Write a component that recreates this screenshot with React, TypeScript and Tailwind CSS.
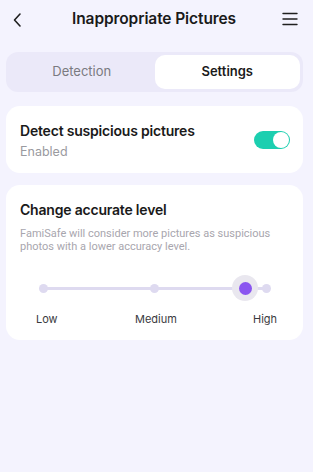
import { useState } from 'react';

export default function App() {
  const [tab, setTab] = useState<'detection' | 'settings'>('settings');
  const [enabled, setEnabled] = useState(true);

  return (
    <div
      className="w-[313px] h-[472px] bg-[#f4f3fe] text-[#1a1a1a] overflow-hidden"
      style={{ fontFamily: 'Inter, "Noto Sans", sans-serif' }}
    >
      {/* header */}
      <div className="h-[38px] flex items-center justify-between px-[11px]">
        <svg width="10" height="16" viewBox="0 0 10 16" fill="none" className="ml-[1px] mt-[1px]">
          <path d="M8 2 L2.5 8 L8 14" stroke="#1f1f1f" strokeWidth="1.6" strokeLinecap="round" strokeLinejoin="round" />
        </svg>
        <h1 className="text-[15.5px] font-semibold tracking-[-0.1px] ml-[4px]">Inappropriate Pictures</h1>
        <svg width="16" height="14" viewBox="0 0 16 14" fill="none" className="mr-[4px]">
          <path d="M1 1.5 H15 M1 7 H15 M1 12.5 H15" stroke="#1f1f1f" strokeWidth="1.4" strokeLinecap="round" />
        </svg>
      </div>

      {/* tabs */}
      <div className="mt-[14px] ml-[6px] mr-[10px] h-[40px] rounded-[12px] bg-[#ebe9f9] p-[3px] flex">
        <button
          onClick={() => setTab('detection')}
          className={`flex-1 rounded-[10px] text-[13px] ${tab === 'detection' ? 'bg-white font-semibold text-[#1a1a1a]' : 'text-[#7a7a80]'}`}
        >
          Detection
        </button>
        <button
          onClick={() => setTab('settings')}
          className={`flex-1 rounded-[10px] text-[13px] ${tab === 'settings' ? 'bg-white font-semibold text-[#1a1a1a]' : 'text-[#7a7a80]'}`}
        >
          Settings
        </button>
      </div>

      {/* detect card */}
      <div className="mt-[14px] ml-[6px] mr-[10px] h-[67px] rounded-[14px] bg-white flex items-center justify-between pl-[14px] pr-[13px]">
        <div className="flex flex-col mt-[2px]">
          <span className="text-[14px] font-semibold tracking-[-0.2px] leading-[20px]">Detect suspicious pictures</span>
          <span className="text-[12.5px] text-[#9a9aa0] leading-[18px] mt-[2px]">{enabled ? 'Enabled' : 'Disabled'}</span>
        </div>
        <button
          onClick={() => setEnabled(!enabled)}
          className={`w-[36px] h-[18px] rounded-full flex items-center px-[1px] ${enabled ? 'bg-[#1ccfb0] justify-end' : 'bg-[#d6d4de] justify-start'}`}
        >
          <span className="w-[16px] h-[16px] rounded-full bg-white" />
        </button>
      </div>

      {/* accuracy card */}
      <div className="mt-[12px] ml-[6px] mr-[10px] h-[155px] rounded-[14px] bg-white px-[14px] pt-[15px]">
        <div className="text-[14px] font-semibold tracking-[-0.2px] leading-[20px]">Change accurate level</div>
        <p
          className="mt-[7px] text-[11px] leading-[13px] text-[#a8a6ae]"
          style={{ fontFamily: 'Roboto, "Noto Sans", sans-serif' }}
        >
          FamiSafe will consider more pictures as suspicious photos with a lower accuracy level.
        </p>

        <div className="relative mt-[22px] h-[26px]">
          <div className="absolute left-[23px] w-[223px] top-[12px] h-[3px] rounded-full bg-[#dedaf0]" />
          <span className="absolute left-[19px] top-[9px] w-[9px] h-[9px] rounded-full bg-[#dedaf0]" />
          <span className="absolute left-[130px] top-[9px] w-[9px] h-[9px] rounded-full bg-[#dedaf0]" />
          <span className="absolute left-[242px] top-[9px] w-[9px] h-[9px] rounded-full bg-[#dedaf0]" />
          <span className="absolute left-[212px] top-0 w-[26px] h-[26px] rounded-full bg-[#e9e7ef] flex items-center justify-center">
            <span className="w-[13px] h-[13px] rounded-full bg-[#8a55f0]" />
          </span>
        </div>

        <div className="relative mt-[10px] h-[16px] text-[11px] text-[#3a3a3e]">
          <span className="absolute left-[16px] top-0">Low</span>
          <span className="absolute left-[115px] top-0">Medium</span>
          <span className="absolute left-[233px] top-0">High</span>
        </div>
      </div>
    </div>
  );
}
